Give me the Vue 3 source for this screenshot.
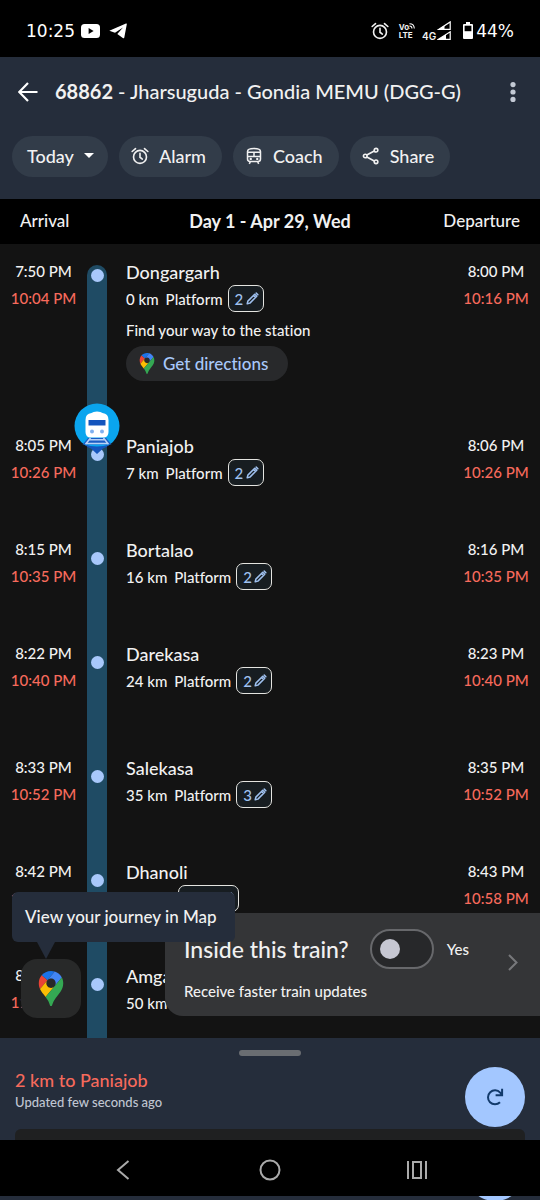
<script setup>
import { ref } from 'vue'

const insideTrain = ref(false)

const chips = [
  { label: 'Alarm', icon: 'i-alarm' },
  { label: 'Coach', icon: 'i-coach' },
  { label: 'Share', icon: 'i-share' },
]

const stops = [
  { name: 'Dongargarh', km: '0 km', platform: '2', arr: ['7:50 PM', '10:04 PM'], dep: ['8:00 PM', '10:16 PM'], directions: true },
  { name: 'Paniajob', km: '7 km', platform: '2', arr: ['8:05 PM', '10:26 PM'], dep: ['8:06 PM', '10:26 PM'], train: true },
  { name: 'Bortalao', km: '16 km', platform: '2', arr: ['8:15 PM', '10:35 PM'], dep: ['8:16 PM', '10:35 PM'] },
  { name: 'Darekasa', km: '24 km', platform: '2', arr: ['8:22 PM', '10:40 PM'], dep: ['8:23 PM', '10:40 PM'], long: true },
  { name: 'Salekasa', km: '35 km', platform: '3', arr: ['8:33 PM', '10:52 PM'], dep: ['8:35 PM', '10:52 PM'] },
  { name: 'Dhanoli', km: '42 km', platform: '', arr: ['8:42 PM', '10:58 PM'], dep: ['8:43 PM', '10:58 PM'] },
  { name: 'Amgaon', km: '50 km', platform: null, arr: ['8:50 PM', '11:05 PM'], dep: ['', ''] },
]
</script>

<template>
  <div class="screen">
    <svg class="defs" aria-hidden="true">
      <symbol id="i-alarm" viewBox="0 0 20 20">
        <g fill="none" stroke="currentColor" stroke-width="1.800" stroke-linecap="round">
          <circle cx="10" cy="11" r="7.200" />
          <path d="M10 7v4.400l2.600 2M1.300 5 5 1.800M18.700 5 15 1.800" />
        </g>
      </symbol>
      <symbol id="i-coach" viewBox="0 0 20 20">
        <g fill="none" stroke="currentColor" stroke-width="1.700" stroke-linejoin="round">
          <path d="M2.800 5C2.800 2.400 5.500 1.700 10 1.700s7.200.700 7.200 3.300v8.200q0 2.800-2.800 2.800H5.600q-2.800 0-2.800-2.800zM2.800 5.800h14.400M2.800 10.500h14.400M10 5.800v4.700M6 16l-1.200 2.800M14 16l1.200 2.800" />
        </g>
        <circle cx="6.400" cy="13.200" r="1.300" fill="currentColor" />
        <circle cx="13.600" cy="13.200" r="1.300" fill="currentColor" />
      </symbol>
      <symbol id="i-share" viewBox="0 0 20 20">
        <g fill="none" stroke="currentColor" stroke-width="1.800">
          <path d="M5.400 8.900 13.600 4.500M5.400 11.100l8.200 4.400" />
          <circle cx="3.600" cy="10" r="2" />
          <circle cx="15.600" cy="3.500" r="2" />
          <circle cx="15.600" cy="16.500" r="2" />
        </g>
      </symbol>
      <symbol id="i-pencil" viewBox="0 0 14 14">
        <path d="M1.300 12.700 2 9.800 9.400 2.400 11.600 4.600 4.200 12zM8 3.800 10.200 6M11 1.200 12.800 3" fill="none" stroke="currentColor" stroke-width="1.600" stroke-linejoin="round" stroke-linecap="round" />
      </symbol>
      <symbol id="i-pin" viewBox="0 0 92.300 132.300">
        <path fill="#1a73e8" d="M60.200 2.200C55.800.8 51 0 46.100 0 32 0 19.300 6.400 10.800 16.500l21.800 18.300L60.200 2.200z" />
        <path fill="#ea4335" d="M10.800 16.500C4.100 24.500 0 34.900 0 46.100c0 8.700 1.700 15.700 4.600 22l28-33.300-21.800-18.300z" />
        <path fill="#4285f4" d="M46.200 28.500c9.800 0 17.700 7.900 17.700 17.700 0 4.300-1.600 8.300-4.200 11.400 0 0 13.900-16.600 27.500-32.700-5.600-10.800-15.300-19-27-22.700L32.600 34.800c3.300-3.800 8.100-6.300 13.600-6.300" />
        <path fill="#fbbc04" d="M46.200 63.800c-9.800 0-17.700-7.900-17.700-17.700 0-4.300 1.500-8.300 4.100-11.300l-28 33.300c4.800 10.600 12.800 19.200 21 29.900l34.100-40.500c-3.300 3.900-8.100 6.300-13.500 6.300" />
        <path fill="#34a853" d="M59.100 109.200c15.400-24.100 33.300-35 33.300-63 0-7.700-1.900-14.900-5.200-21.300L25.600 98c2.600 3.400 5.300 7.300 7.900 11.300 9.400 14.500 6.800 23.100 12.800 23.100s3.400-8.700 12.800-23.200" />
      </symbol>
    </svg>

    <div class="status">
      <span class="clock">10:25</span>
      <svg class="yt" viewBox="0 0 19 14"><rect width="19" height="14" rx="3.500" fill="#fff" /><path d="M7.600 4v6l5-3z" fill="#000" /></svg>
      <svg class="tg" viewBox="0 0 18 16"><path d="M.3 7.700 17 .5q1-.3.8.7l-2.500 13.200q-.3 1.300-1.500.5L8.300 11.100 14 4.600 6 9.800z" fill="#fff" /></svg>
      <span class="spacer"></span>
      <svg class="s-alarm"><use href="#i-alarm" /></svg>
      <span class="volte"><span>Vo<svg class="waves" viewBox="0 0 7 7"><path d="M.5.800Q6 .8 6.200 6.500M.5 3.400q3 0 3 3.100M.5 6.300h.5" fill="none" stroke="#fff" stroke-width="1.200" /></svg></span><span>LTE</span></span>
      <span class="net">4G</span>
      <svg class="signal" viewBox="0 0 14 19">
        <g fill="none" stroke="#fff" stroke-width="1.200"><path d="M1.500 8.400h11.700V.9zM1.500 18.300h11.700v-7.500z" /></g>
        <path d="M1.500 8.400h6V4.600zM1.500 18.300h7.500v-4.800z" fill="#fff" />
      </svg>
      <svg class="battery" viewBox="0 0 10 17"><path d="M3 0h4v2h2q1 0 1 1v13q0 1-1 1H1q-1 0-1-1V3q0-1 1-1h2z" fill="#fff" /><path d="M1.600 3.700h6.800v5.500H1.600z" fill="#000" /></svg>
      <span class="clock">44%</span>
    </div>

    <header class="top">
      <div class="title-row">
        <button class="bare" aria-label="Back">
          <svg class="back" viewBox="0 0 20 20"><path d="M19.500 10H1.600M10 1 1.200 10l8.800 9" fill="none" stroke="#fff" stroke-width="2.200" /></svg>
        </button>
        <h1><b>68862</b> - Jharsuguda - Gondia MEMU (DGG-G)</h1>
        <button class="bare" aria-label="More">
          <svg class="more" viewBox="0 0 6 20"><g fill="#c3c9d4"><circle cx="3" cy="2.600" r="2.600" /><circle cx="3" cy="10" r="2.600" /><circle cx="3" cy="17.400" r="2.600" /></g></svg>
        </button>
      </div>
      <div class="chips">
        <button class="chip today">Today <svg class="caret" viewBox="0 0 10 5"><path d="M0 0h10L5 5z" fill="#fff" /></svg></button>
        <button v-for="c in chips" :key="c.label" class="chip">
          <svg class="chip-icon"><use :href="'#' + c.icon" /></svg>{{ c.label }}
        </button>
      </div>
    </header>

    <main class="timeline">
      <table>
        <thead>
          <tr><th>Arrival</th><th class="day">Day 1 - Apr 29, Wed</th><th>Departure</th></tr>
        </thead>
        <tbody>
          <tr v-for="s in stops" :key="s.name" :class="{ first: s.directions, long: s.long }">
            <td class="time">{{ s.arr[0] }}<span class="late">{{ s.arr[1] }}</span></td>
            <td class="rail">
              <span class="dot"></span>
              <svg v-if="s.train" class="train" viewBox="0 0 46 52">
                <circle cx="23" cy="23" r="22.500" fill="#0aa5ee" />
                <path d="M10.500 41.500q12.500 4 25 0-3 3-6.500 4L23 51l-6-5.500q-3.500-1-6.500-4z" fill="#1455bd" />
                <path d="M14 35h18l5.500 6.500h-29z" fill="#1b5cc4" />
                <path d="M16.500 35 11.500 41.300M29.500 35l5 6.300M15.500 36.800h15M12.500 40.500h21" stroke="#b9d2f5" stroke-width="1.500" fill="none" />
                <path d="M11.500 17q0-6.500 6-7 1.500-1.500 5.500-1.500t5.500 1.500q6 .5 6 7v12q0 5.500-5.500 5.500H17q-5.500 0-5.500-5.500z" fill="#fff" />
                <path d="M14.500 17h17v5.500h-17z" fill="#1455bd" />
                <circle cx="18" cy="28.500" r="2" fill="#7fb0ef" /><circle cx="28" cy="28.500" r="2" fill="#7fb0ef" />
              </svg>
            </td>
            <td class="stop">
              <div class="name">{{ s.name }}</div>
              <div class="meta">
                <span>{{ s.km }}</span>
                <span v-if="s.platform" class="pf">Platform</span>
                <button v-if="s.platform !== null" class="edit" :class="{ wide: !s.platform }" :aria-label="'Edit platform at ' + s.name">{{ s.platform }}<svg class="pencil"><use href="#i-pencil" /></svg></button>
              </div>
              <template v-if="s.directions">
                <p class="find">Find your way to the station</p>
                <button class="directions"><svg class="pin-sm"><use href="#i-pin" /></svg>Get directions</button>
              </template>
            </td>
            <td class="time">{{ s.dep[0] }}<span class="late">{{ s.dep[1] }}</span></td>
          </tr>
        </tbody>
      </table>

      <section class="inside">
        <div class="inside-text">
          <div class="inside-row">
            <label class="question" for="inside">Inside this train?</label>
            <input id="inside" v-model="insideTrain" class="switch" type="checkbox" />
            <label class="yes" for="inside">Yes</label>
          </div>
          <p>Receive faster train updates</p>
        </div>
        <svg class="chev" viewBox="0 0 10 17"><path d="m1 1 7.500 7.500L1 16" fill="none" stroke="#77787b" stroke-width="2" /></svg>
      </section>

      <div class="map-float">
        <div class="tip">View your journey in Map</div>
        <button class="map-btn" aria-label="Map"><svg class="pin-lg"><use href="#i-pin" /></svg></button>
      </div>
    </main>

    <footer class="sheet">
      <span class="handle"></span>
      <div class="sheet-row">
        <div>
          <p class="distance">2 km to Paniajob</p>
          <p class="updated">Updated few seconds ago</p>
        </div>
        <button class="refresh" aria-label="Refresh">
          <svg viewBox="0 0 18 18"><path d="M14 14.200A7 7 0 1 1 14.200 4.600L15.700 6.400M16.100.8v6.400H9.600" fill="none" stroke="#123a6b" stroke-width="2" /></svg>
        </button>
      </div>
      <div class="panel"></div>
    </footer>

    <nav class="nav">
      <button class="bare" aria-label="Go back"><svg class="n-back" viewBox="0 0 14 20"><path d="M12.500 1 2 10l10.500 9" fill="none" stroke="#aaa" stroke-width="2" /></svg></button>
      <button class="bare" aria-label="Home"><svg class="n-home" viewBox="0 0 22 22"><circle cx="11" cy="11" r="9.500" fill="none" stroke="#aaa" stroke-width="2" /></svg></button>
      <button class="bare" aria-label="Recent apps"><svg class="n-recent" viewBox="0 0 22 18"><path d="M2 0v18M20 0v18M7 1h8v16H7z" fill="none" stroke="#aaa" stroke-width="2" /></svg></button>
    </nav>
    <div class="edge"><span></span></div>
  </div>
</template>

<style>
body { margin: 0; background: #131313; }
</style>

<style scoped>
.screen {
  display: flex;
  flex-direction: column;
  height: 100vh;
  overflow: hidden;
  background: #131313;
  color: #f1f1f1;
  font-family: Lato, "Noto Sans", sans-serif;
  font-weight: 500;
  font-variant-ligatures: none;
}
.defs { position: absolute; width: 0; height: 0; }
svg { display: block; flex: none; }
p, h1 { margin: 0; }
button { font: inherit; font-variant-ligatures: none; color: inherit; border: 0; padding: 0; margin: 0; cursor: pointer; }
.bare { background: none; display: flex; }

.status {
  display: flex;
  align-items: center;
  height: 57px;
  box-sizing: border-box;
  padding: 4px 26px 0;
  background: #000;
  flex: none;
}
.clock { font-family: "DejaVu Sans", sans-serif; font-size: 17px; font-weight: 400; color: #fff; }
.yt { width: 19px; height: 14px; margin-left: 6px; }
.tg { width: 18px; height: 16px; margin-left: 9px; }
.spacer { flex: 1; }
.s-alarm { width: 18px; height: 18px; }
.volte { display: flex; flex-direction: column; margin-left: 10px; font: 700 8px/8px Inter, sans-serif; }
.volte span { display: flex; }
.waves { width: 6px; height: 6px; }
.net { font: 600 10px/10px Inter, sans-serif; margin: 10px 1px 0 7px; }
.signal { width: 14px; height: 19px; }
.battery { width: 10px; height: 17px; margin: 0 3px 0 12px; }

.top { background: #252d3b; padding: 12px 12px 22px; flex: none; }
.title-row { display: flex; align-items: center; height: 45px; padding: 0 12px 0 6px; }
.back { width: 20px; height: 20px; }
.more { width: 6px; height: 20px; }
h1 { flex: 1; margin-left: 17px; padding-bottom: 2px; font-size: 20px; line-height: 28px; font-weight: 500; white-space: nowrap; }
h1 b { font-weight: 700; }
.chips { display: flex; gap: 11px; margin-top: 22px; }
.chip {
  display: flex;
  align-items: center;
  height: 41px;
  padding: 0 16px 2px 12px;
  box-sizing: border-box;
  border-radius: 21px;
  background: #323c49;
  font-size: 18px;
}
.chip.today { padding: 0 14px 2px 15px; }
.chip-icon { width: 18px; height: 18px; margin-right: 10px; }
.caret { width: 10px; height: 5px; margin-left: 10px; }

.timeline { position: relative; flex: 1; min-height: 0; overflow: hidden; }
table, tbody, thead { display: block; }
thead tr {
  display: grid;
  grid-template-columns: 1fr auto 1fr;
  align-items: center;
  height: 45px;
  box-sizing: border-box;
  padding: 0 20px 2px;
  background: #000;
  font-size: 17px;
}
th { padding: 0; font-weight: 500; text-align: left; }
th:last-child { text-align: right; }
th.day { font-size: 18px; font-weight: 700; }
td { padding: 0; }
tbody { padding-top: 14px; }
tbody tr { display: grid; grid-template-columns: 87px 20px 1fr 88px; min-height: 104px; }
tbody tr.long { min-height: 114px; }
tbody tr.first { min-height: 174px; }
.time { text-align: center; font-size: 15px; line-height: 27px; white-space: nowrap; }
.late { display: block; color: #f76a5c; }
.rail { position: relative; background: #1f4b64; padding-top: 16px; }
.first .rail { margin-top: 7px; padding-top: 4px; border-radius: 10px 10px 0 0; }
.dot { display: block; width: 13px; height: 13px; margin: 0 auto; border-radius: 50%; background: #a8c8fb; }
.train { position: absolute; left: -13px; top: -29px; width: 46px; height: 52px; }
.stop { padding: 2px 0 0 19px; }
.name { font-size: 18px; line-height: 25px; }
.meta { display: flex; align-items: center; height: 27px; font-size: 15px; white-space: nowrap; }
.pf { margin-left: 7px; }
.edit {
  display: flex;
  align-items: center;
  justify-content: space-between;
  box-sizing: border-box;
  width: 36px;
  height: 27px;
  margin-left: 5px;
  padding: 0 4px 0 6px;
  border: 1px solid #e4e4e0;
  border-radius: 7px;
  background: #171d21;
  color: #9fc1f0;
  font-size: 15px;
}
.edit.wide { width: 61px; margin-left: 11px; justify-content: flex-end; }
.pencil { width: 13px; height: 13px; }
.find { font-size: 15px; line-height: 20px; margin-top: 8px; }
.directions {
  display: flex;
  align-items: center;
  height: 35px;
  margin-top: 6px;
  padding: 0 20px 0 13px;
  border-radius: 18px;
  background: #28292b;
  color: #a8c8fb;
  font-size: 17px;
}
.pin-sm { width: 16px; height: 21px; margin-right: 8px; }

.inside {
  position: absolute;
  right: 0;
  bottom: 22px;
  left: 165px;
  display: flex;
  align-items: center;
  justify-content: space-between;
  box-sizing: border-box;
  height: 103px;
  padding: 0 22px 0 19px;
  border-radius: 18px 0 0 18px;
  background: #343537;
}
.inside-row { display: flex; align-items: center; height: 40px; }
.question { font-size: 23px; white-space: nowrap; }
.inside p { font-size: 15px; line-height: 20px; margin-top: 12px; }
.switch {
  appearance: none;
  display: flex;
  align-items: center;
  box-sizing: border-box;
  width: 64px;
  height: 40px;
  margin: 0 13px 0 21px;
  padding: 0 8px;
  border: 2px solid #67686b;
  border-radius: 20px;
  background: #27282a;
}
.switch::before { content: ""; width: 20px; height: 20px; border-radius: 50%; background: #c6c7d2; }
.switch:checked { justify-content: flex-end; }
.yes { font-size: 15px; }
.chev { width: 10px; height: 17px; margin-top: -4px; }

.map-float { position: absolute; left: 12px; bottom: 20px; }
.tip {
  position: relative;
  padding: 0 18px 0 13px;
  line-height: 50px;
  border-radius: 6px;
  background: #252d3b;
  font-size: 17px;
  white-space: nowrap;
}
.tip::after {
  content: "";
  position: absolute;
  top: 50px;
  left: 25px;
  border: 9px solid transparent;
  border-top: 17px solid #252d3b;
  border-bottom: 0;
}
.map-btn {
  display: flex;
  align-items: center;
  justify-content: center;
  width: 60px;
  height: 59px;
  margin: 17px 0 0 9px;
  border-radius: 16px;
  background: #282929;
}
.pin-lg { width: 26px; height: 35px; }

.sheet { flex: none; background: #252d3b; padding: 12px 15px 0; }
.handle { display: block; width: 62px; height: 6px; margin: 0 auto; border-radius: 3px; background: #6a6d71; }
.sheet-row { display: flex; justify-content: space-between; margin-top: 11px; }
.distance { margin-top: 2px; font-size: 18px; line-height: 22px; color: #f76a5c; }
.updated { font-size: 13px; line-height: 22px; color: #c0c6d2; }
.refresh { display: flex; align-items: center; justify-content: center; width: 60px; height: 60px; border-radius: 50%; background: #a3c7ff; }
.refresh svg { width: 18px; height: 18px; }
.panel { height: 11px; margin-top: 2px; border-radius: 6px 6px 0 0; background: #1f2021; }

.nav { display: grid; grid-template-columns: 1fr 1fr 1fr; align-items: center; justify-items: center; height: 56px; flex: none; padding: 4px 50px 0; box-sizing: border-box; background: #000; }
.n-back { width: 14px; height: 20px; }
.n-home { width: 22px; height: 22px; }
.n-recent { width: 22px; height: 18px; }
.edge { display: flex; justify-content: flex-end; align-items: flex-end; height: 4px; flex: none; overflow: hidden; padding-right: 15px; background: #252d3b; }
.edge span { width: 60px; height: 60px; margin-bottom: -1px; border-radius: 50%; background: #a3c7ff; flex: none; }
</style>
